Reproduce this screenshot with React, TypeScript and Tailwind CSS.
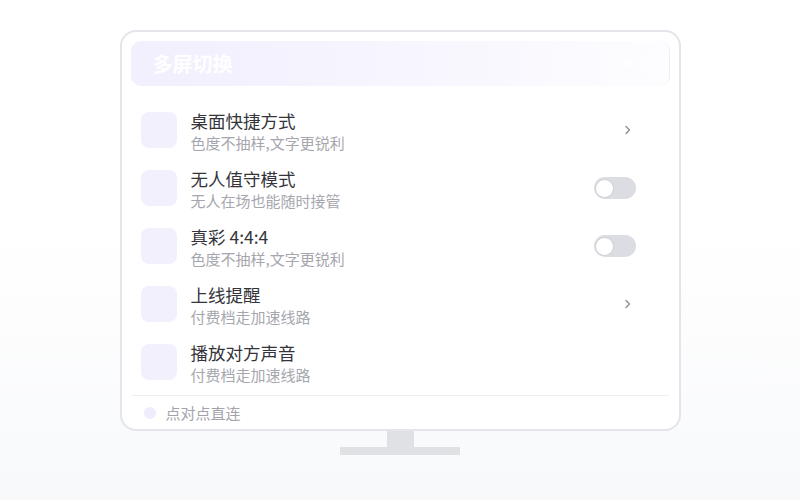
import React from "react";

const font = { fontFamily: '"Noto Sans CJK SC", "Noto Sans", sans-serif' };

type Row = { title: string; sub: string; right: "chevron" | "toggle" | "none" };

const rows: Row[] = [
  { title: "桌面快捷方式", sub: "色度不抽样,文字更锐利", right: "chevron" },
  { title: "无人值守模式", sub: "无人在场也能随时接管", right: "toggle" },
  { title: "真彩 4:4:4", sub: "色度不抽样,文字更锐利", right: "toggle" },
  { title: "上线提醒", sub: "付费档走加速线路", right: "chevron" },
  { title: "播放对方声音", sub: "付费档走加速线路", right: "none" },
];

function Chevron() {
  return (
    <svg width="8" height="12" viewBox="0 0 8 12" className="mr-[4px]">
      <path d="M2 2.5 L5.5 6 L2 9.5" fill="none" stroke="#8a8f99" strokeWidth="1.4" strokeLinecap="round" strokeLinejoin="round" />
    </svg>
  );
}

function Toggle() {
  return (
    <div className="w-[42px] h-[22px] rounded-full bg-[#dcdde2] flex items-center px-[1.5px]">
      <div className="w-[19px] h-[19px] rounded-full bg-white border border-[#cfd1d6]" />
    </div>
  );
}

export default function App() {
  return (
    <div style={font} className="w-[800px] h-[500px] bg-gradient-to-b from-white from-45% to-[#f8f9fb] flex flex-col items-center pt-[30px]">
      <div className="w-[561px] h-[401px] border-2 border-[#e3e5ea] rounded-[16px] bg-white px-[9px] pt-[9px] flex flex-col">
        <div className="h-[45px] rounded-[10px] bg-gradient-to-r from-[#f2effe] via-[#f7f5fe] to-[#fdfdff] flex items-center justify-between pl-[22px] pr-[18px] border-r border-[#eeeef2]">
          <span className="text-white text-[20px] font-bold leading-none">多屏切换</span>
          <div className="flex gap-[14px] items-center opacity-70">
            <div className="w-[6px] h-[6px] rounded-full bg-white" />
            <div className="w-[6px] h-[6px] rounded-full bg-white" />
            <div className="w-[6px] h-[6px] rounded-full bg-white" />
          </div>
        </div>
        <div className="flex flex-col pt-[15px]">
          {rows.map((r, i) => (
            <div key={i} className="h-[58px] flex items-center pl-[10px] pr-[34px]">
              <div className="w-[36px] h-[36px] rounded-[8px] bg-[#f3f0fd] shrink-0" />
              <div className="ml-[14px] flex flex-col flex-1 pt-[2px]">
                <span className="text-[17.5px] leading-[23px] text-[#34343a]">{r.title}</span>
                <span className="text-[15px] leading-[21px] text-[#a6a7ae]">{r.sub}</span>
              </div>
              {r.right === "chevron" && <Chevron />}
              {r.right === "toggle" && <Toggle />}
            </div>
          ))}
        </div>
        <div className="mt-[4px] border-t border-[#eceef1] mx-[1px] flex items-center h-[34px] pt-[1px] pl-[12px]">
          <div className="w-[12px] h-[12px] rounded-full bg-[#efecfd]" />
          <span className="ml-[10px] text-[15px] text-[#a3a4ab]">点对点直连</span>
        </div>
      </div>
      <div className="w-[27px] h-[16px] bg-[#dfe1e5]" />
      <div className="w-[120px] h-[8px] bg-[#dfe1e5]" />
    </div>
  );
}
